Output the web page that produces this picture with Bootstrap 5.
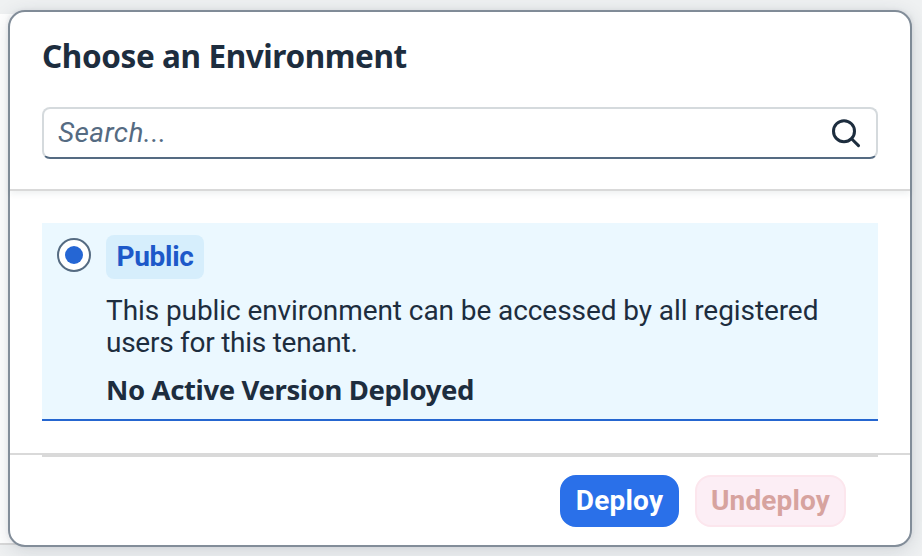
<!DOCTYPE html>
<html lang="en">
<head>
<meta charset="utf-8">
<meta name="viewport" content="width=device-width, initial-scale=1">
<title>Choose an Environment</title>
<link href="https://cdn.jsdelivr.net/npm/bootstrap@5.3.0/dist/css/bootstrap.min.css" rel="stylesheet">
<style>
  body { font-family: Roboto, "Noto Sans", sans-serif; font-size: 28px; line-height: 32px; color: #1d2d3e; background: #eff1f2; overflow: hidden; height: 556px; }
  .backdrop-page { height: 531px; width: 898px; margin-top: 14px; background: #fff; border-bottom: 2px solid #d9d9d9; }
  .env-dialog { left: 8px; top: 10px; width: 904px; height: 537px; background: #fff; border: 2px solid #828d99; border-radius: 17px; box-shadow: 0 4px 20px rgba(34,53,72,.14), 0 0 4px rgba(34,53,72,.08); }
  .env-head { height: 179px; padding: 28px 32px 0; border-bottom: 2px solid #d9d9d9; box-shadow: 0 3px 6px rgba(34,53,72,.07); }
  .env-title { font-family: "Noto Sans", sans-serif; font-size: 31.5px; line-height: 32px; font-weight: 700; margin: 0 0 35px; letter-spacing: -.4px; white-space: nowrap; }
  .env-search { height: 52px; border: 2px solid #d5dadd; border-bottom-color: #556b82; border-radius: 8px; padding: 0 15px 0 14px; }
  .env-search input { font-style: italic; font-size: 28px; line-height: 32px; letter-spacing: .4px; color: #1d2d3e; outline: 0; }
  .env-search input::placeholder { color: #556b82; opacity: 1; }
  .env-body { height: 264px; padding: 32px 32px 0; border-bottom: 2px solid #d9d9d9; }
  .env-item { height: 198px; background: #ebf8ff; border-bottom: 2px solid #2566d0; padding: 12px 15px 0; gap: 15px; }
  .env-radio { width: 34px; height: 34px; margin-top: 3px; flex: none; }
  .env-tag { height: 44px; width: 98px; background: #d6eefc; color: #1d59c9; border-radius: 8px; font-weight: 700; letter-spacing: -.3px; }
  .env-desc { margin: 16px 0 15px; white-space: nowrap; letter-spacing: -.08px; }
  .env-desc-end { letter-spacing: -.26px; }
  .env-status { font-family: "Noto Sans", sans-serif; font-size: 27.5px; letter-spacing: -.38px; }
  .env-foot { margin: 0 32px; border-top: 2px solid #d9d9d9; padding: 18px 32px 0; gap: 16px; }
  .env-btn { height: 52px; padding: 0; font-size: 28px; line-height: 32px; font-weight: 700; border-width: 2px; border-radius: 16px; }
  .env-deploy { width: 119px; background: #2a70e9; border-color: #2a70e9; color: #fff; letter-spacing: .2px; }
  .env-undeploy, .env-undeploy:disabled { width: 151px; background: #fceef5; border-color: #fce6ed; color: #d7a39f; opacity: 1; letter-spacing: .15px; }
</style>
</head>
<body>
<div class="d-flow-root overflow-hidden h-100 position-relative">
  <div class="backdrop-page"></div>
  <section class="env-dialog position-absolute" role="dialog" aria-labelledby="dlg-title">
    <header class="env-head">
      <h1 class="env-title" id="dlg-title">Choose an Environment</h1>
      <div class="env-search d-flex align-items-center">
        <input class="border-0 p-0 bg-transparent flex-grow-1" type="text" placeholder="Search..." aria-label="Search">
        <svg width="30" height="30" viewBox="0 0 30 30" fill="none" stroke="#1d2d3e" stroke-width="3" stroke-linecap="round"><circle cx="13" cy="13.2" r="10.5"/><path d="M20.8 21 27.5 27.6"/></svg>
      </div>
    </header>
    <main class="env-body">
      <div class="env-item d-flex align-items-start">
        <svg class="env-radio" viewBox="0 0 34 34" role="radio" aria-checked="true" aria-label="Public"><circle cx="17" cy="17" r="16" fill="#fff" stroke="#556b82" stroke-width="2"/><circle cx="17" cy="17" r="9" fill="#2566d4"/></svg>
        <div>
          <div class="env-tag d-flex align-items-center justify-content-center">Public</div>
          <p class="env-desc">This public environment can be accessed by all registered<br><span class="env-desc-end">users for this tenant.</span></p>
          <div class="env-status fw-bold">No Active Version Deployed</div>
        </div>
      </div>
    </main>
    <footer class="env-foot d-flex justify-content-end">
      <button class="btn env-btn env-deploy" type="button">Deploy</button>
      <button class="btn env-btn env-undeploy" type="button" disabled>Undeploy</button>
    </footer>
  </section>
</div>
<script src="https://cdn.jsdelivr.net/npm/bootstrap@5.3.0/dist/js/bootstrap.bundle.min.js"></script>
</body>
</html>
